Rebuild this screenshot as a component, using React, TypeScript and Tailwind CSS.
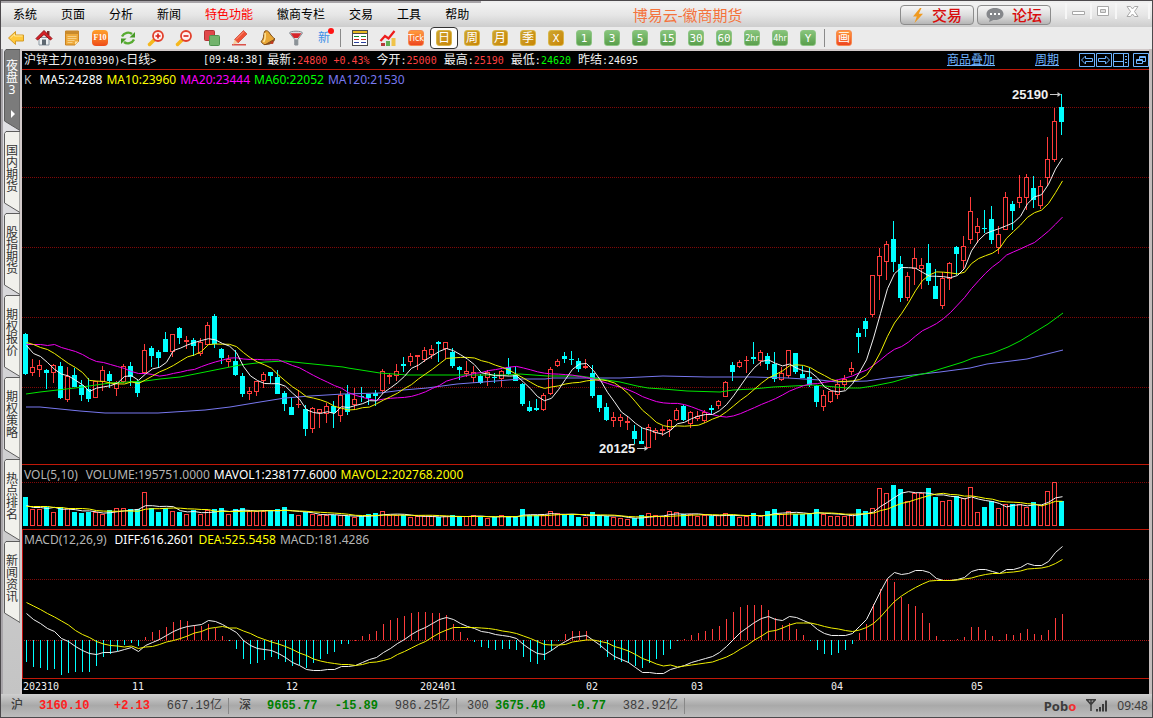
import React from "react";

const CJK = "font-['Noto_Sans','Noto_Sans_CJK_SC',sans-serif]";
const MONO = "font-['DejaVu_Sans_Mono','Noto_Sans_CJK_SC',monospace]";

const UP = "#ff3c3c";
const DOWN = "#00ffff";

/* One entry per trading day: direction, high, body top, body bottom, low. */
const CANDLES = `
d333,334,374,375 u359,367,373,376 u360,365,370,377 d369,370,373,389 u364,365,373,383
d362,366,398,399 u367,376,400,402 d368,375,387,387 d380,385,395,401 d378,389,399,402
u381,381,398,398 u366,370,382,391 d371,374,381,388 u381,382,389,396 u364,366,382,383
d362,366,377,386 d380,382,393,397 u344,350,373,373 d346,348,356,367 d350,352,358,367
d332,339,352,352 u334,334,352,357 d327,328,338,344 u336,340,342,349 d338,340,346,356
u338,342,354,356 u322,325,345,345 d314,316,344,348 d348,349,358,364 u355,359,362,367
d350,361,375,376 d373,376,394,397 u387,391,394,400 u381,381,392,396 u372,374,381,388
d372,372,376,383 d370,377,394,394 d391,393,404,411 d398,407,415,415 u390,404,405,408
d405,409,429,436 u407,408,429,433 u409,409,413,428 u403,406,414,423 d401,406,413,428
u391,395,416,422 d385,394,412,415 u388,399,405,410 d387,396,397,402 d394,394,398,405
d390,393,396,406 u369,371,391,394 u373,375,377,384 u364,371,376,381 d357,364,366,372
u353,356,362,366 u355,355,357,370 u347,350,360,362 u345,349,355,359 d341,342,344,362
u342,342,349,359 d348,352,366,368 d366,367,370,380 u361,371,374,377 u366,372,378,383
d374,376,383,384 u370,372,378,386 d373,377,378,383 u370,371,379,387 d358,367,374,375
d366,375,381,381 d383,384,404,406 d401,407,411,412 d399,408,410,411 u393,395,410,411
u367,369,394,395 u359,361,366,367 d352,356,359,363 d351,359,360,365 d358,361,369,372
u359,366,368,369 d365,373,396,398 d395,395,408,412 d403,407,420,421 u412,417,421,427
u414,417,421,427 u416,421,423,430 d425,431,439,444 d427,441,444,444 u424,427,448,448
u428,430,433,440 u426,429,431,436 u419,420,430,437 u408,410,420,421 d405,406,420,421
u411,412,424,428 u411,416,419,421 u410,412,421,423 d405,408,410,414 u400,401,406,409
u381,382,397,397 d362,365,372,381 u360,362,367,368 u356,360,361,373 d342,357,359,364
u350,352,361,366 d353,356,364,370 d352,364,379,382 u367,373,380,381 u350,350,376,378
d353,353,372,374 d366,374,378,378 d368,377,385,387 d385,386,402,407 u390,395,407,411
u391,391,402,403 u380,384,395,399 u375,379,385,390 u362,368,372,375 d328,333,337,353
d318,321,329,337 u275,275,315,317 u248,256,276,300 u241,244,262,280 d221,239,262,272
d256,264,298,302 u272,276,298,301 u248,258,269,285 u258,265,269,289 d244,263,281,285
d269,286,299,299 u272,278,306,309 u262,263,279,290 d246,247,254,275 u236,246,261,270
u197,211,240,244 u218,226,233,243 d210,228,229,233 d206,219,240,244 u226,234,248,254
u192,197,230,230 d201,204,211,230 u175,197,203,208 u174,177,198,210 d176,188,200,208
u180,186,206,209 u137,159,178,186 u108,121,160,162 d94,107,122,135
`
  .trim()
  .split(/\s+/)
  .map((s) => {
    const [high, top, bottom, low] = s.slice(1).split(",").map(Number);
    return { up: s[0] === "u", high, top, bottom, low };
  });

const VOLUME = [
  497, 509, 509, 507, 512, 507, 508, 512, 513, 512, 512, 514, 510, 508, 508, 509, 509, 492, 508, 512, 508, 511, 512,
  514, 510, 514, 510, 509, 508, 514, 509, 508, 511, 511, 511, 510, 509, 507, 514, 515, 512, 514, 515, 515, 515, 515,
  516, 517, 516, 514, 513, 511, 515, 515, 515, 517, 516, 516, 516, 517, 516, 515, 516, 516, 515, 516, 518, 517, 515,
  516, 516, 509, 515, 515, 515, 511, 513, 515, 514, 517, 517, 512, 515, 516, 517, 518, 519, 518, 515, 513, 515, 516,
  511, 512, 514, 514, 516, 515, 516, 515, 513, 515, 517, 516, 513, 516, 511, 509, 514, 511, 514, 514, 513, 509, 514,
  516, 516, 516, 514, 509, 511, 508, 488, 493, 485, 489, 501, 493, 493, 488, 497, 501, 500, 496, 498, 487, 512, 507,
  501, 508, 504, 504, 504, 507, 502, 505, 491, 482, 501,
];

const MACD = [
  662, 667, 668, 670, 669, 675, 673, 672, 672, 672, 666, 657, 654, 651, 645, 643, 646, 637, 632, 630, 627, 622, 620,
  621, 625, 626, 624, 628, 636, 641, 649, 659, 664, 663, 660, 657, 659, 662, 666, 665, 668, 663, 659, 654, 652, 644,
  644, 640, 636, 634, 631, 624, 620, 618, 616, 613, 612, 612, 613, 613, 615, 624, 632, 638, 642, 647, 648, 650, 649,
  649, 650, 657, 662, 664, 660, 651, 641, 634, 631, 631, 631, 641, 648, 657, 660, 662, 663, 666, 668, 663, 659, 655,
  649, 641, 639, 635, 633, 631, 629, 626, 619, 612, 607, 605, 605, 605, 610, 618, 625, 623, 629, 635, 641, 650, 654,
  655, 653, 650, 644, 633, 624, 604, 589, 579, 582, 597, 604, 606, 613, 623, 636, 640, 640, 639, 637, 627, 627, 630,
  636, 640, 634, 635, 633, 629, 634, 635, 630, 618, 614,
];

const DIFF = [
  613, 619, 623, 628, 631, 638, 641, 646, 650, 653, 654, 652, 652, 651, 649, 647, 651, 645, 642, 639, 635, 631, 628,
  626, 625, 624, 620, 621, 624, 628, 632, 640, 645, 648, 649, 650, 653, 657, 662, 665, 669, 670, 670, 669, 669, 666,
  666, 665, 662, 659, 657, 652, 648, 643, 639, 634, 630, 627, 623, 619, 617, 619, 623, 626, 628, 631, 632, 634, 635,
  636, 638, 644, 649, 653, 654, 650, 645, 641, 637, 636, 635, 640, 645, 651, 656, 659, 662, 667, 672, 672, 673, 673,
  669, 667, 665, 662, 660, 658, 656, 652, 646, 639, 632, 627, 622, 618, 616, 619, 620, 616, 617, 620, 623, 629, 633,
  635, 635, 635, 633, 626, 619, 605, 591, 578, 572, 574, 573, 570, 570, 572, 578, 580, 580, 579, 577, 571, 569, 569,
  571, 573, 569, 569, 567, 563, 565, 565, 561, 552, 546,
];

const MA60 =
  "26,394 40,392 75,388 110,383 145,381 160,379 180,377 215,370 240,365 265,362 285,361 303,363 343,367 348,368 380,373 407,375 508,375 520,374 547,376 580,376 600,379 620,382 637,386 648,388 663,389 687,391 720,392 733,390 753,389 773,387 813,385 847,388 860,388 873,386 893,382 913,376 927,373 950,366 963,362 973,358 993,353 1008,347 1020,341 1048,324 1063,313";
const MA120 =
  "26,407 40,407 60,409 80,411 105,413 158,413 205,410 230,407 260,402 285,398 310,396 343,394 380,393 403,390 427,388 457,384 483,382 508,380 520,379 545,379 553,378 620,378 663,376 707,377 753,377 788,378 820,380 837,382 867,381 887,378 913,375 940,372 970,368 987,364 1027,359 1047,354 1063,350";

const closes = CANDLES.map((c) => (c.up ? c.top : c.bottom));

function average(values: number[], days: number, lead: number[]) {
  return values.map((_, i) =>
    i < lead.length ? lead[i] : values.slice(i - days + 1, i + 1).reduce((a, b) => a + b, 0) / days
  );
}

const toPoints = (ys: number[]) => ys.map((y, i) => `${26.5 + i * 7},${(y + 0.5).toFixed(1)}`).join(" ");

const ma5 = toPoints(average(closes, 5, [345, 353, 356, 362]));
const ma10 = toPoints(average(closes, 10, [342, 344, 347, 349, 353, 358, 363, 367, 372]));
const ma20 = toPoints(
  average(closes, 20, [344, 344, 344, 345, 344, 347, 349, 351, 354, 358, 361, 362, 364, 366, 368, 371, 373, 373, 374])
);
const vol5 = toPoints(average(VOLUME, 5, [505, 507, 507, 508]));
const vol10 = toPoints(average(VOLUME, 10, [506, 506, 506, 506, 507, 507, 508, 508, 508]));
const diff = toPoints(DIFF);
const dea = toPoints(DIFF.map((d, i) => d + (640 - MACD[i]) / 2));

function Grid({ y, bright }: { y: number; bright?: boolean }) {
  return (
    <line x1="0" x2="100%" y1={y + 0.5} y2={y + 0.5} stroke={bright ? "#b01818" : "#800808"} strokeDasharray="1 1" />
  );
}

function Curve({ points, color }: { points: string; color: string }) {
  return <polyline points={points} fill="none" stroke={color} strokeWidth="1" />;
}

function Bar({ x, top, bottom, up }: { x: number; top: number; bottom: number; up: boolean }) {
  const h = bottom - top;
  if (up && h > 2) return <rect x={x + 0.5} y={top + 0.5} width="4" height={h - 1} fill="#000" stroke={UP} />;
  return <rect x={x} y={top} width="5" height={Math.max(h, 1)} fill={up ? UP : DOWN} />;
}

function PriceChart() {
  return (
    <svg className="block h-[376px] w-full" role="img" aria-label="日线">
      {[107, 177, 247, 317, 387].map((y) => (
        <Grid key={y} y={y - 88} />
      ))}
      <g transform="translate(-22 -88)">
        {CANDLES.map((c, i) => {
          const x = 23 + i * 7;
          return (
            <g key={i}>
              <rect x={x + 2} y={c.high} width="1" height={Math.max(c.low - c.high, 1)} fill={c.up ? UP : DOWN} />
              <Bar x={x} top={c.top} bottom={c.bottom} up={c.up} />
            </g>
          );
        })}
        <Curve points={MA120} color="#7878f0" />
        <Curve points={MA60} color="#00e600" />
        <Curve points={ma20} color="#f000f0" />
        <Curve points={ma10} color="#f0f000" />
        <Curve points={ma5} color="#f0f0f0" />
        <g stroke="#c8c8c8" fill="#c8c8c8" strokeWidth="1">
          <path d="M1050 94.5H1058" />
          <path d="M1057.500 92V97L1061 94.5Z" stroke="none" />
          <path d="M637 448.5H645" />
          <path d="M644.500 446V451L648 448.500Z" stroke="none" />
        </g>
        <g fill="#f0f0f0" className="font-['Liberation_Sans',sans-serif] text-[13px] font-bold">
          <text x="1012" y="99">25190</text>
          <text x="599" y="453">20125</text>
        </g>
      </g>
    </svg>
  );
}

function VolumeChart() {
  return (
    <svg className="block h-[47px] w-full" role="img" aria-label="VOL">
      <Grid y={0} />
      <g transform="translate(-22 -482)">
        {VOLUME.map((top, i) => (
          <Bar key={i} x={23 + i * 7} top={top} bottom={526} up={CANDLES[i].up} />
        ))}
        <Curve points={vol5} color="#f4f4f4" />
        <Curve points={vol10} color="#ffff00" />
      </g>
    </svg>
  );
}

function MacdChart() {
  return (
    <svg className="block h-[130px] w-full overflow-visible" role="img" aria-label="MACD">
      <Grid y={31} />
      <Grid y={92} bright />
      <g transform="translate(-22 -548)">
        <rect x="22" y="530" width="1" height="148" fill="#c01010" />
        {MACD.map((y, i) => (
          <rect
            key={i}
            x={26 + i * 7}
            y={Math.min(y, 640)}
            width="1"
            height={Math.max(Math.abs(y - 640), 1)}
            fill={y <= 640 ? UP : DOWN}
          />
        ))}
        <Curve points={diff} color="#f0f0f0" />
        <Curve points={dea} color="#f0f000" />
      </g>
    </svg>
  );
}

const AXIS: [number, string][] = [
  [1, "202310"], [110, "11"], [264, "12"], [398, "202401"], [564, "02"], [669, "03"], [809, "04"], [949, "05"],
];

function Axis() {
  return (
    <svg className="block h-[15px] w-full">
      <g fill="#f0f0f0" className="font-['DejaVu_Sans_Mono',monospace] text-[10px]">
        {AXIS.map(([x, t]) => (
          <text key={t} x={x} y="11">{t}</text>
        ))}
      </g>
    </svg>
  );
}

/* ---------- toolbar icons ---------- */

function Icon({ children }: { children: React.ReactNode }) {
  return (
    <svg viewBox="0 0 16 16" className="h-4 w-4 overflow-visible" fill="none">
      {children}
    </svg>
  );
}

const BackIcon = (
  <Icon>
    <path d="M.5 8 7.500 1.500V5h8v6h-8v3.500Z" fill="#ffc83a" stroke="#d39a26" />
    <path d="M2.500 8 6.500 4.200V6h8" stroke="#ffe79a" />
  </Icon>
);
const HomeIcon = (
  <Icon>
    <path d="M3 7.500h10V15H3Z" fill="#eceff1" stroke="#8d99a3" />
    <path d="M11 1h2.500v4H11Z" fill="#7d2a2a" />
    <path d="M0 8.500 8 .5l8 8-1.500 1.500L8 4.500 1.500 10Z" fill="#d81f26" stroke="#8f1217" strokeWidth="1" />
    <path d="M6 9.500h4V15H6Z" fill="#5d6770" />
  </Icon>
);
const NoteIcon = (
  <Icon>
    <path d="M1.500 1h13v10.500L11 15H1.500Z" fill="#eda93b" stroke="#c98222" />
    <path d="M1.500 1h13v3h-13Z" fill="#c98a2c" />
    <path d="M3.500 6.500h9M3.500 8.500h9M3.500 10.500h7M3.500 12.500h5" stroke="#f8d590" strokeWidth=".9" />
    <path d="M14.500 11.500H11V15Z" fill="#ffe1a0" />
  </Icon>
);
const F10Icon = (
  <span className="flex h-4 w-4 items-center justify-center rounded-sm bg-gradient-to-b from-[#ffa02c] to-[#ee4a18] font-['Liberation_Serif',serif] text-[8px] font-bold text-white">
    F10
  </span>
);
const RefreshIcon = (
  <Icon>
    <path d="M2 6.500C4 2.500 9 1.500 12 4" stroke="#58ac32" strokeWidth="2.400" />
    <path d="M15 2v5.500H9.500Z" fill="#469a26" />
    <path d="M14 9.500C12 13.500 7 14.500 4 12" stroke="#58ac32" strokeWidth="2.400" />
    <path d="M1 14V8.500h5.500Z" fill="#469a26" />
  </Icon>
);
function Magnifier({ plus }: { plus?: boolean }) {
  return (
    <Icon>
      <path d="m6 10-4.500 4.500" stroke="#f5b81e" strokeWidth="3.500" strokeLinecap="round" />
      <circle cx="10" cy="6" r="5" fill="#fff1f1" stroke="#e2402c" strokeWidth="1.800" />
      <path d={plus ? "M7.500 6h5M10 3.500v5" : "M7.500 6h5"} stroke="#d8201a" strokeWidth="1.600" />
    </Icon>
  );
}
const CopyIcon = (
  <Icon>
    <rect x=".5" y=".5" width="10" height="10" rx="1" fill="#e0484a" stroke="#b23336" />
    <rect x="5.500" y="5.500" width="10" height="10" rx="1" fill="#72b36c" stroke="#4f9450" />
  </Icon>
);
const PencilIcon = (
  <Icon>
    <path d="M0 14.800h14" stroke="#d62a20" strokeWidth="1.200" />
    <path d="m2.500 9.500 9-9 3.500 3.500-9 9Z" fill="#ef5135" stroke="#bf2d1a" strokeWidth=".6" />
    <path d="m2.500 9.500 3.500 3.500-5 1.500Z" fill="#f6cfa0" />
    <path d="m4 9.500 8-8" stroke="#ff9d84" />
  </Icon>
);
const BellIcon = (
  <Icon>
    <path d="M5 1c2-.8 3.500.2 4.500 2 2 3 3.500 4.500 5.500 6L5 14.800C2.500 14 1.500 12.500 1 11.500 4.500 9 3 3.500 5 1Z" fill="#e8a736" stroke="#7d4a14" />
    <path d="M5 3c.5 4 .5 6.500-1.500 9" stroke="#ffe39a" strokeWidth="1.500" />
    <path d="M5 14.800 15 9c.5 3-6 6.800-10 5.800Z" fill="#8b4f1a" />
    <circle cx="12" cy="12.500" r="1.500" fill="#c03a20" />
  </Icon>
);
const FunnelIcon = (
  <Icon>
    <path d="M1.500 3c0-2.400 13-2.400 13 0L9.800 9.500V15H6.800V9.500Z" fill="#d9dde0" stroke="#858c92" />
    <path d="M2.500 3.300h11L10 8H6Z" fill="#d6262c" />
    <path d="M6.800 9.500h3V15h-3Z" fill="#8b9297" />
  </Icon>
);
const NewIcon = (
  <span className="relative text-[12px] leading-4 text-[#3d8fe8]">
    新
    <span className="absolute -right-1 -top-0.5 h-1.5 w-1.5 rounded-full bg-[#ff1414]" />
  </span>
);
const TableIcon = (
  <Icon>
    <rect x=".5" y=".5" width="15" height="15" fill="#fff" stroke="#4a4a4a" />
    <path d="M1 1h14v2H1Z" fill="#e6b820" />
    <path d="M1 3.500h14" stroke="#4a4a4a" />
    <path d="M2 6.500h5M9 6.500h5" stroke="#138a28" />
    <path d="M2 9.500h5M9 9.500h5" stroke="#d02222" />
    <path d="M2 12.500h5M9 12.500h5" stroke="#2a3f9c" />
  </Icon>
);
const TrendIcon = (
  <Icon>
    <path d="M1 13h4v3H1Z" fill="#b63a3a" />
    <path d="M6 11h4v5H6Z" fill="#5fae54" />
    <path d="M11.500 8h4v8h-4Z" fill="#f0c34a" />
    <path d="m.5 11 4.500-5 3.500 2.500L14.500 1" stroke="#ee1c1c" strokeWidth="2.200" />
  </Icon>
);

const TONES = {
  gold: "bg-gradient-to-br from-[#cda52c] to-[#c98500] border-[#d9b64a]",
  green: "bg-gradient-to-b from-[#86c47a] to-[#5a9f4c] border-[#8cc482]",
  orange: "bg-gradient-to-b from-[#ff9a3c] to-[#ee4420] border-[#f58a50]",
};

function Tile({ label, tone, size = "text-[12px]" }: { label: string; tone: keyof typeof TONES; size?: string }) {
  return (
    <span
      className={`flex h-4 w-4 items-center justify-center rounded-[3px] border leading-none text-white ${size} ${TONES[tone]}`}
    >
      {label}
    </span>
  );
}

function ToolButton({ label, active, children }: { label: string; active?: boolean; children: React.ReactNode }) {
  return (
    <button
      type="button"
      aria-label={label}
      className={`flex h-[22px] w-7 shrink-0 items-center justify-center ${
        active ? "rounded-[4px] border border-[#333] bg-white" : ""
      }`}
    >
      {children}
    </button>
  );
}

const TOOLS: [string, React.ReactNode][] = [
  ["后退", BackIcon], ["首页", HomeIcon], ["便签", NoteIcon], ["F10", F10Icon], ["刷新", RefreshIcon],
  ["放大", <Magnifier plus />], ["缩小", <Magnifier />], ["叠加", CopyIcon], ["画线", PencilIcon],
  ["预警", BellIcon], ["筛选", FunnelIcon], ["新", NewIcon],
];

const narrow = "text-[9px] font-['DejaVu_Sans_Condensed','Liberation_Sans',sans-serif]";
const mono = "text-[11px] font-['DejaVu_Sans_Mono',monospace]";

const PERIODS: [string, React.ReactNode][] = [
  ["报价", TableIcon], ["走势", TrendIcon],
  ["Tick", <Tile label="Tick" tone="orange" size={narrow} />],
  ["日", <Tile label="日" tone="gold" />],
  ["周", <Tile label="周" tone="gold" />],
  ["月", <Tile label="月" tone="gold" />],
  ["季", <Tile label="季" tone="gold" />],
  ["X", <Tile label="X" tone="gold" size={mono} />],
  ["1", <Tile label="1" tone="green" size={mono} />],
  ["3", <Tile label="3" tone="green" size={mono} />],
  ["5", <Tile label="5" tone="green" size={mono} />],
  ["15", <Tile label="15" tone="green" size={mono} />],
  ["30", <Tile label="30" tone="green" size={mono} />],
  ["60", <Tile label="60" tone="green" size={mono} />],
  ["2hr", <Tile label="2hr" tone="green" size={narrow} />],
  ["4hr", <Tile label="4hr" tone="green" size={narrow} />],
  ["Y", <Tile label="Y" tone="green" size={mono} />],
];

function Divider() {
  return (
    <span className="flex w-2 shrink-0 justify-center pr-1">
      <span className="h-[18px] w-px bg-[#8a8a8a]" />
    </span>
  );
}

function Toolbar() {
  return (
    <div className="flex h-[22px] items-center bg-[#ebebeb] pl-px">
      {TOOLS.map(([label, icon]) => (
        <ToolButton key={label} label={label}>{icon}</ToolButton>
      ))}
      <Divider />
      {PERIODS.map(([label, icon]) => (
        <ToolButton key={label} label={label} active={label === "日"}>{icon}</ToolButton>
      ))}
      <Divider />
      <ToolButton label="画">
        <Tile label="画" tone="orange" />
      </ToolButton>
    </div>
  );
}

const MENU = ["系统", "页面", "分析", "新闻", "特色功能", "徽商专栏", "交易", "工具", "帮助"];

const actionClass =
  "flex h-5 w-[74px] items-center justify-center gap-2 rounded-[4px] border border-[#8c8c8c] bg-gradient-to-b from-[#f6f6f6] via-[#dedede] to-[#b6b6b6] text-[15px] leading-none font-medium text-[#d80c0c]";

function MenuBar() {
  return (
    <header className="flex h-6 bg-gradient-to-b from-[#f3f3f3] via-[#e6e6e6] to-[#cdcdcd]">
      <nav className="flex items-center">
        {MENU.map((m) => (
          <button
            key={m}
            type="button"
            className={`px-3 text-[12px] leading-6 ${m === "特色功能" ? "text-[#ff0000]" : "text-black"}`}
          >
            {m}
          </button>
        ))}
      </nav>
      <h1 className="flex-1 pr-1.5 text-center text-[15px] leading-6 text-[#f4733c]">博易云-徽商期货</h1>
      <div className="flex items-center gap-[3px] pr-3.5">
        <button type="button" className={actionClass}>
          <svg viewBox="0 0 12 15" className="h-[15px] w-3">
            <path d="M8 0 1 8.500h3.800L2.500 15 11 5.800H6.800L9.500 0Z" fill="#f09a20" />
          </svg>
          交易
        </button>
        <button type="button" className={actionClass}>
          <svg viewBox="0 0 18 14" className="h-3.5 w-[18px]">
            <path d="M9 0c5 0 8.500 2.600 8.500 6S14 12 9 12H7.500L3 14l.8-3C1.500 10 .5 8 .5 6 .5 2.600 4 0 9 0Z" fill="#85878b" />
            <path d="M4 5h2v2H4ZM8 5h2v2H8ZM12 5h2v2h-2Z" fill="#fff" />
          </svg>
          论坛
        </button>
      </div>
      <div className="flex h-4 pr-0.5 text-[#a8a8a8]">
        <button type="button" aria-label="最小化" className="flex w-[25px] items-center justify-center border-l-2 border-[#f6f6f6]">
          <svg viewBox="0 0 13 10" className="h-2.5 w-[13px]">
            <path d="M.5 5.500h12v3H.5Z" fill="#fff" stroke="currentColor" />
          </svg>
        </button>
        <button type="button" aria-label="还原" className="flex w-[25px] items-center justify-center border-l-2 border-[#f6f6f6]">
          <svg viewBox="0 0 13 10" className="h-2.5 w-[13px]">
            <path d="M.5.5h11v9H.5Z" fill="#fff" stroke="currentColor" />
            <path d="M3.500 3.500h5v3h-5Z" fill="#ddd" stroke="currentColor" />
          </svg>
        </button>
        <button type="button" aria-label="关闭" className="flex w-[35px] items-center justify-center border-x-2 border-[#f6f6f6]">
          <svg viewBox="0 0 13 11" className="h-[11px] w-[13px]">
            <path d="M1 .5h3.500l2 2.500 2-2.500H12L8.500 5.500l3.500 5H8.500l-2-2.500-2 2.500H1l3.500-5Z" fill="#fff" stroke="currentColor" />
          </svg>
        </button>
      </div>
    </header>
  );
}

const TABS = ["国内期货", "股指期货", "期权报价", "期权策略", "热点排名", "新闻资讯"];

function SideTab({ label, active }: { label: string; active?: boolean }) {
  return (
    <button
      type="button"
      className={`relative flex h-[82px] w-full items-start justify-center pl-px text-[12px] leading-3 ${
        active ? "pt-[11px] text-white" : "pt-3.5 text-[#333]"
      }`}
    >
      <svg viewBox="0 0 17 82" className="absolute inset-0 h-[82px] w-[17px]">
        <path d="M17 .5H3L1.500 2.500V72L17 81.500Z" fill={active ? "#7b7b7b" : "#f1f1ec"} stroke="#5c5c5c" />
        {active && <path d="M8 61v8l4-4Z" fill="#fff" />}
      </svg>
      <span className="relative w-3 break-all">{label}</span>
    </button>
  );
}

function HeaderIcon({ label, children }: { label: string; children: React.ReactNode }) {
  return (
    <button type="button" aria-label={label} className="h-[15px] w-4 text-[#6fb4ff]">
      <svg viewBox="0 0 16 15" className="h-[15px] w-4" fill="none" stroke="currentColor">
        <path d="M.5.5h15v13H.5Z" />
        {children}
      </svg>
    </button>
  );
}

function QuoteItem({ name, value, color }: { name: string; value: string; color: string }) {
  return (
    <span className="whitespace-nowrap">
      <span className="text-[12px]">{name}</span>:<span className={color}>{value}</span>
    </span>
  );
}

function QuoteBar() {
  return (
    <div className="flex h-[19px] items-center justify-between border-b border-[#c01808] bg-black pl-0.5">
      <div className={`flex gap-1 text-[10px] leading-[18px] text-[#f0f0f0] ${MONO}`}>
        <span className="w-[175px] whitespace-nowrap">
          <span className="text-[12px]">沪锌主力</span>(010390)&lt;<span className="text-[12px]">日线</span>&gt;
        </span>
        <span>[09:48:38]</span>
        <div className="flex gap-[7px]">
          <QuoteItem name="最新" value="24800 +0.43%" color="text-[#ff4040]" />
          <QuoteItem name="今开" value="25000" color="text-[#ff4040]" />
          <QuoteItem name="最高" value="25190" color="text-[#ff4040]" />
          <QuoteItem name="最低" value="24620" color="text-[#00ff00]" />
          <QuoteItem name="昨结" value="24695" color="text-[#f0f0f0]" />
        </div>
      </div>
      <div className="flex items-center text-[12px] leading-[18px] text-[#6fb4ff]">
        <a href="#overlay" className="mr-10 underline">商品叠加</a>
        <a href="#period" className="mr-5 underline">周期</a>
        <div className="flex items-center gap-px">
          <HeaderIcon label="左移"><path d="M2.500 7 6.500 3v2.500h7v3h-7V11Z" /></HeaderIcon>
          <HeaderIcon label="右移"><path d="M13.500 7 9.500 3v2.500h-7v3h7V11Z" /></HeaderIcon>
          <HeaderIcon label="分栏"><path d="M10.500 1v12M1 8.500h9M12 3.500h2M12 6.500h2M12 9.500h2" /></HeaderIcon>
          <span className="w-0.5" />
          <HeaderIcon label="还原"><path d="M6.500 6V3.500h6v5H10M3.500 6.500h6v4h-6ZM6.500 4.500h6M3.500 7.500h6" /></HeaderIcon>
        </div>
      </div>
    </div>
  );
}

function Legend({ items, height }: { items: [string, string][]; height: string }) {
  return (
    <div className={`flex gap-1 pl-0.5 text-[12px] font-['Noto_Sans',sans-serif] leading-5 ${height}`}>
      {items.map(([text, color]) => (
        <span key={text} className={`first:mr-1 ${color}`}>{text}</span>
      ))}
    </div>
  );
}

function Market({ name, value, change, amount, up }: { name: string; value: string; change: string; amount: string; up?: boolean }) {
  const tone = up ? "text-[#ff2020]" : "text-[#008000]";
  return (
    <div className="flex items-center border-r border-[#888] pl-2.5 pr-1.5 leading-4">
      <span className="w-7 text-[12px] font-medium">{name}</span>
      <span className={`w-[50px] font-bold ${tone}`}>{value}</span>
      <span className={`w-[61px] text-right font-bold ${tone}`}>{change}</span>
      <span className="w-[72px] text-right">{amount}亿</span>
    </div>
  );
}

function StatusBar() {
  return (
    <footer className="flex h-[23px] items-center justify-between bg-gradient-to-b from-[#cfcfcf] via-[#a9a9a9] to-[#bdbdbd] pr-1 text-[#3c3c3c]">
      <div className="flex text-[12px] font-['Liberation_Mono','Noto_Sans_CJK_SC',monospace]">
        <Market name="沪" value="3160.10" change="+2.13" amount="667.19" up />
        <Market name="深" value="9665.77" change="-15.89" amount="986.25" />
        <Market name="300" value="3675.40" change="-0.77" amount="382.92" />
      </div>
      <div className="flex items-center gap-2.5">
        <span className="font-['Noto_Sans',sans-serif] text-[13px] font-bold leading-5">
          Pob<span className="text-[#f03030]">o</span>
        </span>
        <svg viewBox="0 0 21 13" className="h-[13px] w-[21px]" fill="none" stroke="#3c3c3c" strokeWidth="1.500">
          <path d="M0 .8h10M1 1l4 4.500L9 1M5 1v11" />
          <path d="M11 10v2.500M14 8v4.500M17 5v7.500M20 1.500v11" strokeWidth="2" />
        </svg>
        <time className="font-['Noto_Sans',sans-serif] text-[12px] leading-5">09:48</time>
      </div>
    </footer>
  );
}

export default function App() {
  return (
    <div className={`flex min-h-screen flex-col border border-[#4c494c] bg-[#ebebeb] ${CJK}`}>
      <div className="h-0.5 bg-[#eeeeee]">
        <div className="h-0.5 w-5/12 bg-[#a8a5a9]" />
      </div>
      <MenuBar />
      <Toolbar />
      <div className="flex flex-1 border-l-2 border-r-[3px] border-l-[#a8a5a9] border-r-[#c4bcbc]">
        <aside className="w-[17px] shrink-0 bg-gradient-to-b from-[#e4e4e8] to-[#c4c4c4]">
          <SideTab label="夜盘3" active />
          {TABS.map((t) => (
            <SideTab key={t} label={t} />
          ))}
        </aside>
        <main className="flex min-w-0 flex-1 flex-col border-l-2 border-t-2 border-[#d2caca] bg-black">
          <QuoteBar />
          <section className="flex-1 border-b border-[#c01808]">
            <Legend
              height="h-[18px]"
              items={[
                ["K", "text-[#c0c0c0]"],
                ["MA5:24288", "text-white"],
                ["MA10:23960", "text-[#ffff00]"],
                ["MA20:23444", "text-[#ff00ff]"],
                ["MA60:22052", "text-[#00ff00]"],
                ["MA120:21530", "text-[#7878f0]"],
              ]}
            />
            <PriceChart />
          </section>
          <section className="border-b border-[#c01808]">
            <Legend
              height="h-[17px]"
              items={[
                ["VOL(5,10)", "text-[#b4b4b4]"],
                ["VOLUME:195751.0000", "text-[#b4b4b4]"],
                ["MAVOL1:238177.6000", "text-white"],
                ["MAVOL2:202768.2000", "text-[#ffff00]"],
              ]}
            />
            <VolumeChart />
          </section>
          <section className="border-b border-[#c01808]">
            <Legend
              height="h-[18px]"
              items={[
                ["MACD(12,26,9)", "text-[#b4b4b4]"],
                ["DIFF:616.2601", "text-white"],
                ["DEA:525.5458", "text-[#ffff00]"],
                ["MACD:181.4286", "text-[#b4b4b4]"],
              ]}
            />
            <MacdChart />
          </section>
          <Axis />
        </main>
      </div>
      <StatusBar />
    </div>
  );
}
